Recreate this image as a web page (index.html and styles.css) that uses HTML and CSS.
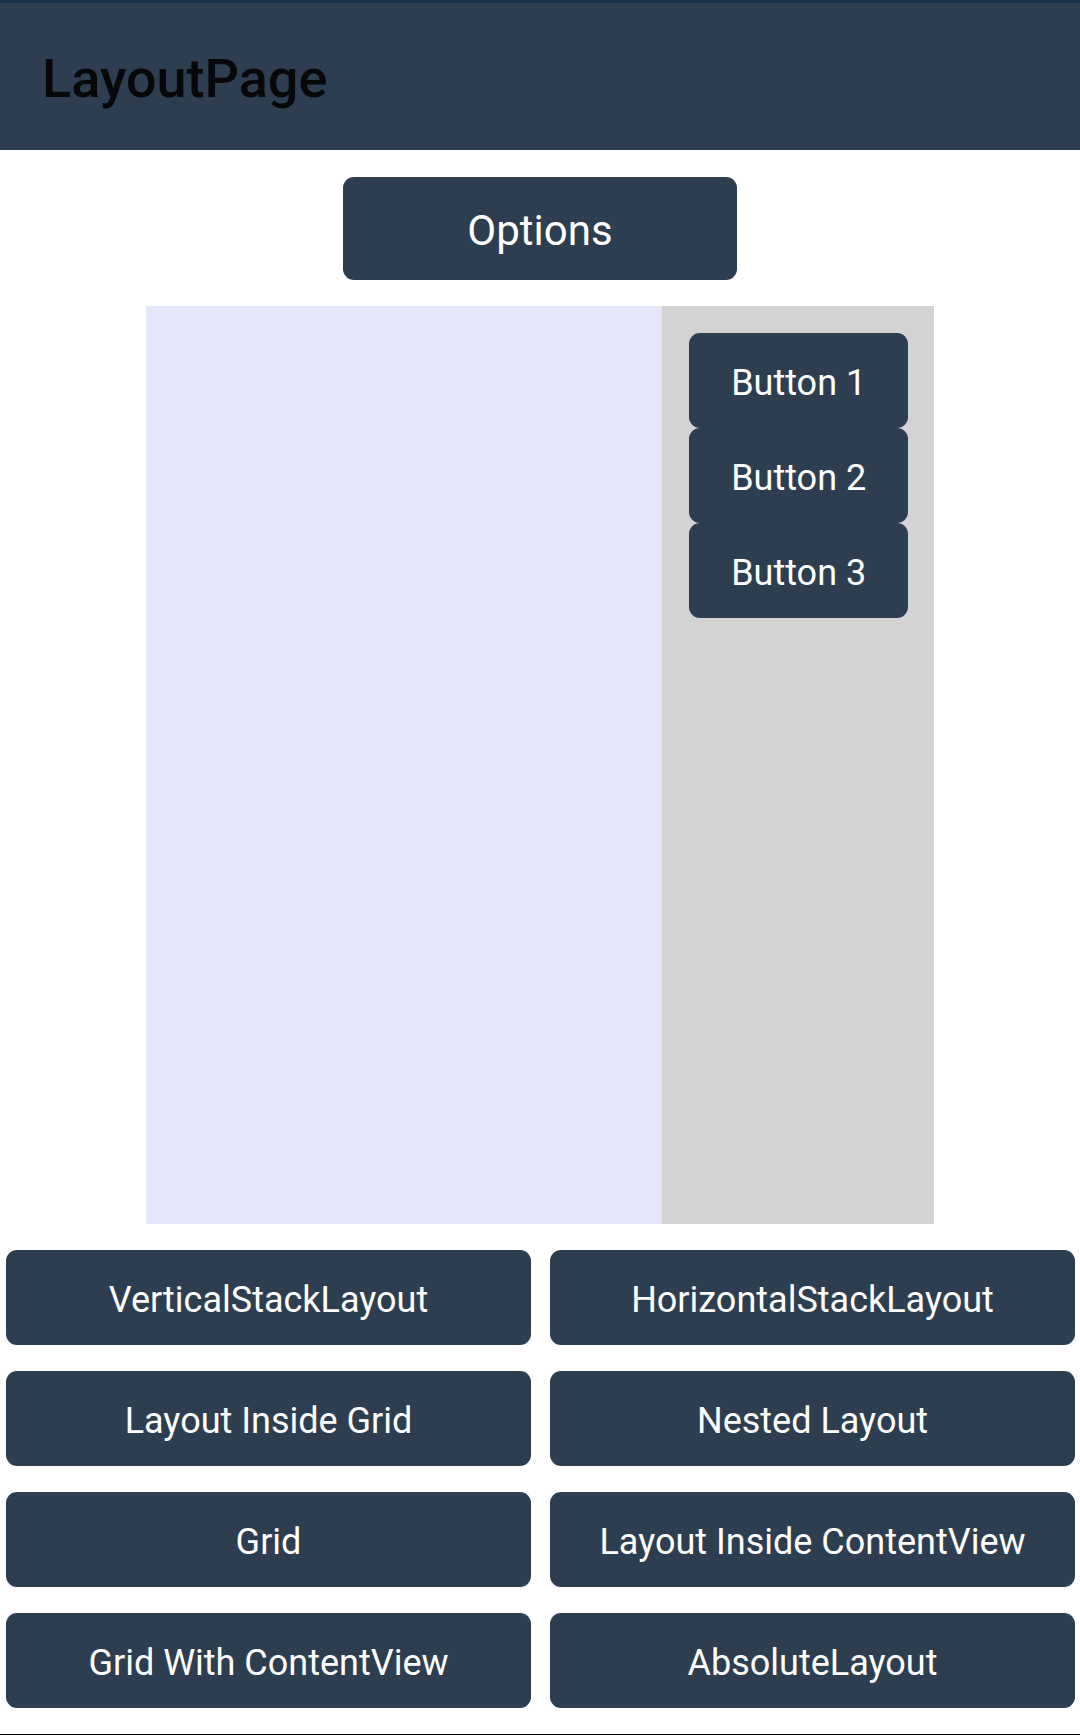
FILE: index.html
```html
<!DOCTYPE html>
<html lang="en">
<head>
<meta charset="utf-8">
<meta name="viewport" content="width=device-width, initial-scale=1">
<title>LayoutPage</title>
<link rel="stylesheet" href="styles.css">
</head>
<body>
<header class="app-bar"><h1 class="title">LayoutPage</h1></header>
<main class="page">
  <button class="btn options" type="button">Options</button>
  <section class="preview">
    <div class="canvas"></div>
    <div class="stack">
      <button class="btn" type="button">Button 1</button>
      <button class="btn" type="button">Button 2</button>
      <button class="btn" type="button">Button 3</button>
    </div>
  </section>
  <nav class="choices">
    <button class="btn" type="button">VerticalStackLayout</button>
    <button class="btn" type="button">HorizontalStackLayout</button>
    <button class="btn" type="button">Layout Inside Grid</button>
    <button class="btn" type="button">Nested Layout</button>
    <button class="btn" type="button">Grid</button>
    <button class="btn" type="button">Layout Inside ContentView</button>
    <button class="btn" type="button">Grid With ContentView</button>
    <button class="btn" type="button">AbsoluteLayout</button>
  </nav>
</main>
</body>
</html>
```
FILE: styles.css
```css
* {
  box-sizing: border-box;
}

body {
  display: flex;
  flex-direction: column;
  min-height: 100vh;
  margin: 0;
  background: #fff;
  border-bottom: 1px solid #000;
  font-family: Roboto, sans-serif;
}

.app-bar {
  display: flex;
  align-items: center;
  height: 150px;
  padding: 4px 42px 0;
  background: #2d3e50;
  border-top: 3px solid #1b3147;
}

.title {
  margin: 0;
  color: #060809;
  font-size: 54px;
  font-weight: 500;
}

.page {
  display: flex;
  flex: 1;
  flex-direction: column;
  align-items: center;
  gap: 26px;
  padding: 27px 0 26px;
}

.btn {
  height: 95px;
  padding: 4px 42px 0;
  border: 0;
  border-radius: 11px;
  background: #2d3e50;
  color: #fff;
  font-family: inherit;
  font-size: 36px;
}

.options {
  width: 36.5%;
  height: 103px;
  font-size: 42px;
}

.preview {
  display: flex;
  flex: 1;
  width: 73%;
}

.canvas {
  flex: 1;
  background: #e5e5fa;
}

.stack {
  display: flex;
  flex-direction: column;
  padding: 27px 26px 27px 27px;
  background: #d3d3d3;
}

.choices {
  display: grid;
  grid-template-columns: 1fr 1fr;
  gap: 26px 19px;
  width: 100%;
  padding: 0 5px 0 6px;
}
```
